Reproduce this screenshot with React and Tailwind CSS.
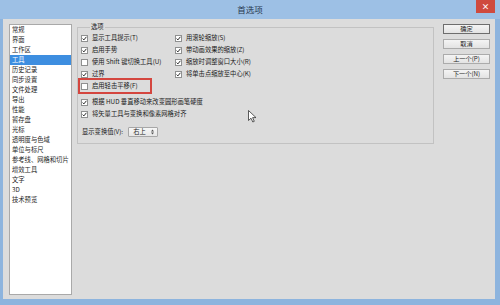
import React from 'react';

const navItems = [
  '常规', '界面', '工作区', '工具', '历史记录', '同步设置', '文件处理', '导出', '性能',
  '暂存盘', '光标', '透明度与色域', '单位与标尺', '参考线、网格和切片', '增效工具', '文字', '3D', '技术预览',
];

function Check({ checked }) {
  return (
    <span className="w-[7px] h-[7px] shrink-0 border border-[#8f9090] bg-white flex items-center justify-center">
      {checked && (
        <svg width="5" height="5" viewBox="0 0 5 5">
          <path d="M0.6 2.6 L1.9 3.9 L4.4 0.8" fill="none" stroke="#2b2b2b" strokeWidth="1" />
        </svg>
      )}
    </span>
  );
}

function Option({ checked, label }) {
  return (
    <div className="h-[12px] flex items-center gap-[4px] whitespace-nowrap">
      <Check checked={checked} />
      <span>{label}</span>
    </div>
  );
}

function DlgButton({ children, primary }) {
  return (
    <button
      className={`w-[47px] h-[10px] flex items-center justify-center leading-none text-[6.2px] text-[#1e1e1e] bg-gradient-to-b from-[#f4f4f4] to-[#e3e3e3] border ${
        primary ? 'border-[#6d6d6d]' : 'border-[#ababab]'
      }`}
    >
      {children}
    </button>
  );
}

export default function App() {
  return (
    <div className="relative w-[500px] h-[305px] bg-[#8db4de] flex flex-col font-['Noto_Sans_CJK_SC',sans-serif] text-[#1a1a1a] overflow-hidden">
      {/* title bar */}
      <div className="relative h-[19px] shrink-0 bg-[#9dc0e5] flex items-center justify-center">
        <span className="text-[8.5px] text-[#27384f] leading-none">首选项</span>
        <div className="absolute right-[5px] top-0 w-[19px] h-[13px] bg-[#cf4a3e] flex items-center justify-center text-white text-[8px] font-bold leading-none">
          ×
        </div>
      </div>

      {/* body */}
      <div className="flex-1 ml-[3px] mr-[5px] mb-[6px] bg-[#dcdcdc] flex pl-[6px] pr-[5px] pt-[4px] pb-[4px] text-[6.3px] leading-none">
        {/* category list */}
        <div className="w-[63px] mt-[1px] bg-white border border-[#a9a9a9] flex flex-col">
          {navItems.map((item) => (
            <div
              key={item}
              className={`h-[10px] flex items-center pl-[2px] whitespace-nowrap ${
                item === '工具' ? 'bg-[#3d8ee0] text-white' : 'text-[#1e1e1e]'
              }`}
            >
              {item}
            </div>
          ))}
        </div>

        {/* options group */}
        <div className="ml-[5px] w-[357px]">
          <fieldset className="border border-[#c2c2c2] pl-[3px] pt-[1px] pb-[4px]">
            <legend className="ml-[9px] px-[1px] h-[8px] leading-[8px]">选项</legend>

            <div className="grid grid-cols-[94px_1fr]">
              <Option checked label="显示工具提示(T)" />
              <Option checked label="用滚轮缩放(S)" />
              <Option checked label="启用手势" />
              <Option checked label="带动画效果的缩放(Z)" />
              <Option checked={false} label="使用 Shift 键切换工具(U)" />
              <Option checked label="缩放时调整窗口大小(R)" />
              <Option checked label="过界" />
              <Option checked label="将单击点缩放至中心(K)" />
            </div>

            <div className="-mt-[2px] -ml-[3px] w-[74px] h-[16px] border-2 border-[#d4463f] pl-[1px] flex items-center">
              <Option checked={false} label="启用轻击平移(F)" />
            </div>

            <div className="mt-[2px]">
              <Option checked label="根据 HUD 垂直移动来改变圆形画笔硬度" />
              <Option checked label="将矢量工具与变换和像素网格对齐" />
            </div>

            <div className="mt-[5px] h-[14px] flex items-center">
              <span className="ml-[1px]">显示变换值(V):</span>
              <div className="ml-[5px] w-[30px] h-[10px] border border-[#a7a7a7] rounded-[1px] bg-gradient-to-b from-[#f7f7f7] to-[#e6e6e6] flex items-center justify-between pl-[4px] pr-[3px]">
                <span>右上</span>
                <svg width="3" height="6" viewBox="0 0 3 6">
                  <path d="M0 2.4 L1.5 0.6 L3 2.4 Z M0 3.6 L1.5 5.4 L3 3.6 Z" fill="#555" />
                </svg>
              </div>
            </div>
          </fieldset>
        </div>

        {/* buttons */}
        <div className="ml-[9px] mt-[1px] flex flex-col gap-[5px]">
          <DlgButton primary>确定</DlgButton>
          <DlgButton>取消</DlgButton>
          <DlgButton>上一个(P)</DlgButton>
          <DlgButton>下一个(N)</DlgButton>
        </div>
      </div>

      {/* mouse pointer */}
      <svg className="absolute left-[248px] top-[110px]" width="9" height="13" viewBox="0 0 9 13">
        <path d="M0.5 0.5 L0.5 10.5 L3 8.2 L4.8 12 L6.3 11.3 L4.6 7.6 L8 7.6 Z" fill="#fff" stroke="#333" strokeWidth="0.8" strokeLinejoin="round" />
      </svg>
    </div>
  );
}
